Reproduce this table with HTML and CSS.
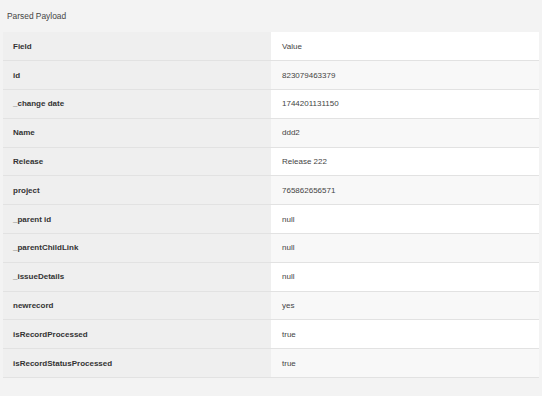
FILE: index.html
```
<!DOCTYPE html>
<html>
<head>
<meta charset="utf-8">
<link rel="stylesheet" href="styles.css">
</head>
<body>
<div class="panel">
  <div class="title">Parsed Payload</div>
  <table class="payload">
    <tr><td class="field">Field</td><td class="value">Value</td></tr>
    <tr><td class="field">id</td><td class="value">823079463379</td></tr>
    <tr><td class="field">_change date</td><td class="value">1744201131150</td></tr>
    <tr><td class="field">Name</td><td class="value">ddd2</td></tr>
    <tr><td class="field">Release</td><td class="value">Release 222</td></tr>
    <tr><td class="field">project</td><td class="value">765862656571</td></tr>
    <tr><td class="field">_parent id</td><td class="value">null</td></tr>
    <tr><td class="field">_parentChildLink</td><td class="value">null</td></tr>
    <tr><td class="field">_issueDetails</td><td class="value">null</td></tr>
    <tr><td class="field">newrecord</td><td class="value">yes</td></tr>
    <tr><td class="field">isRecordProcessed</td><td class="value">true</td></tr>
    <tr><td class="field">isRecordStatusProcessed</td><td class="value">true</td></tr>
  </table>
</div>
</body>
</html>
```
FILE: styles.css
```
html, body {
  margin: 0;
  padding: 0;
  background: #f3f3f3;
  font-family: "Liberation Sans", Arial, sans-serif;
  color: #333;
}
.panel {
  padding: 0 3px;
  height: 396px;
  box-sizing: border-box;
}
.title {
  font-size: 8.4px;
  line-height: 10px;
  padding: 11px 4px 0;
  height: 32px;
  box-sizing: border-box;
  color: #444;
}
.payload {
  width: 536px;
  border-collapse: collapse;
  font-size: 8px;
}
.payload td {
  height: 28.8px;
  padding: 0;
  border-bottom: 1px solid #e2e2e2;
  box-sizing: border-box;
}
.field {
  width: 268px;
  padding-left: 10px !important;
  background: #efefef;
  font-weight: bold;
  color: #333;
}
.value {
  padding-left: 11px !important;
  background: #ffffff;
  color: #444;
}
.payload tr:nth-child(even) .value {
  background: #f8f8f8;
}
```
